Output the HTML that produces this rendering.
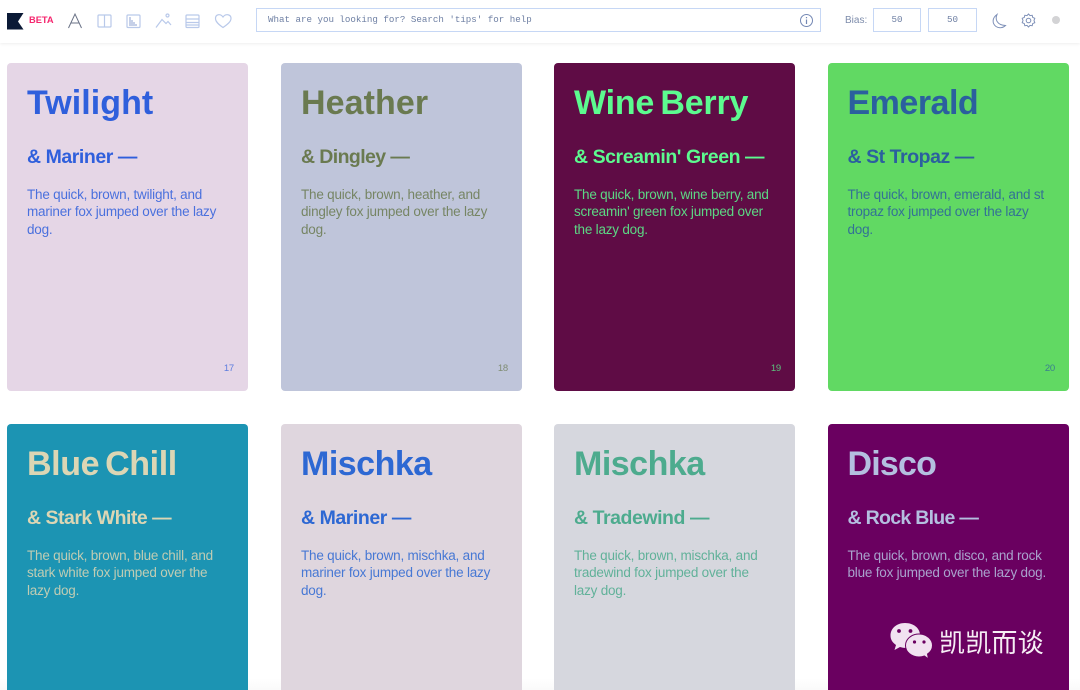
<!DOCTYPE html>
<html lang="en"><head><meta charset="utf-8"><title>Fontpair cards</title>
<style>
*{box-sizing:border-box}
html,body{margin:0;padding:0;width:1080px;height:690px;overflow:hidden;background:#fff;font-family:"Liberation Sans",sans-serif}
#wrap{position:relative;width:1080px;height:690px;overflow:hidden;background:#fff}
.nav{position:absolute;left:0;top:0;width:1080px;height:43px;background:#fff;box-shadow:0 1px 3px rgba(0,0,0,.07)}
.abs{position:absolute}
.card{position:absolute;width:241px;height:328px;border-radius:4px;overflow:hidden}
.low{height:266px;border-radius:4px 4px 0 0}
.card div{position:absolute;white-space:nowrap}
.t{left:20px;top:20px;font-size:34px;line-height:40px;font-weight:700;letter-spacing:-.2px;word-spacing:-3px}
.s{left:20px;top:82.400px;font-size:19.5px;line-height:24px;font-weight:700;letter-spacing:-.45px}
.b{left:20px;top:122.500px;font-size:13.5px;line-height:17.7px;opacity:.85;letter-spacing:-.21px}
.n{right:14px;top:300px;font-size:9.5px;line-height:12px;opacity:.75;letter-spacing:-.2px}
.box{position:absolute;top:8px;height:24px;border:1px solid #c6d7f5;background:#fff;font-family:"Liberation Mono",monospace;font-size:9.17px;color:#6f80a4;line-height:22px}
.fade{position:absolute;left:0;bottom:0;width:1080px;height:12px;background:linear-gradient(#fff,#fafafa)}
</style></head><body><div id="wrap">
<div class="fade"></div>

<div class="card" style="left:7px;top:63px;background:#e5d6e6;color:#2f5fdc"><div class="t" style="letter-spacing:.05px">Twilight</div><div class="s">&amp; Mariner —</div><div class="b">The quick, brown, twilight, and<br>mariner fox jumped over the lazy<br>dog.</div><div class="n">17</div></div>
<div class="card" style="left:281px;top:63px;background:#bfc5da;color:#6a7a50"><div class="t" style="letter-spacing:.08px">Heather</div><div class="s" style="letter-spacing:-.6px">&amp; Dingley —</div><div class="b">The quick, brown, heather, and<br>dingley fox jumped over the lazy<br>dog.</div><div class="n">18</div></div>
<div class="card" style="left:554px;top:63px;background:#5f0c45;color:#5cfb8f"><div class="t">Wine Berry</div><div class="s">&amp; Screamin' Green —</div><div class="b">The quick, brown, wine berry, and<br>screamin' green fox jumped over<br>the lazy dog.</div><div class="n">19</div></div>
<div class="card" style="left:828px;top:63px;background:#61d963;color:#2b609e"><div class="t" style="left:19.500px;letter-spacing:-.5px">Emerald</div><div class="s" style="left:19.500px">&amp; St Tropaz —</div><div class="b" style="left:19.500px">The quick, brown, emerald, and st<br>tropaz fox jumped over the lazy<br>dog.</div><div class="n">20</div></div>

<div class="card low" style="left:7px;top:424px;background:#1c94b3;color:#dcd6b4"><div class="t" style="letter-spacing:-.4px">Blue Chill</div><div class="s" style="letter-spacing:-.5px">&amp; Stark White —</div><div class="b">The quick, brown, blue chill, and<br>stark white fox jumped over the<br>lazy dog.</div></div>
<div class="card low" style="left:281px;top:424px;background:#dfd6de;color:#2d68d3"><div class="t" style="letter-spacing:-.5px">Mischka</div><div class="s">&amp; Mariner —</div><div class="b">The quick, brown, mischka, and<br>mariner fox jumped over the lazy<br>dog.</div></div>
<div class="card low" style="left:554px;top:424px;background:#d6d7de;color:#4dab8e"><div class="t" style="letter-spacing:-.5px">Mischka</div><div class="s">&amp; Tradewind —</div><div class="b">The quick, brown, mischka, and<br>tradewind fox jumped over the<br>lazy dog.</div></div>
<div class="card low" style="left:828px;top:424px;background:#6a0060;color:#b4bfe0"><div class="t" style="left:19.500px;letter-spacing:-.8px">Disco</div><div class="s" style="left:19.500px;letter-spacing:-.7px">&amp; Rock Blue —</div><div class="b" style="left:19.500px">The quick, brown, disco, and rock<br>blue fox jumped over the lazy dog.</div></div>

<div class="nav">
  <svg class="abs" style="left:7px;top:13px" width="17" height="17" viewBox="0 0 17 17"><path d="M0 0H16.5L11 8.500L16.500 16.500H0Z" fill="#0b1a36"/></svg>
  <div class="abs" style="left:29px;top:14px;font-size:9.3px;line-height:13px;font-weight:700;color:#f5266e">BETA</div>
  <svg class="abs" style="left:66px;top:11px" width="170" height="20" viewBox="0 0 170 20" fill="none" stroke-width="1">
    <path d="M2.500 17L9 3L15.500 17M5 12H13" stroke="#6a7286"/>
    <g stroke="#b9c9ea" stroke-width="1.200">
      <rect x="32" y="4" width="13" height="12" rx="1"/><path d="M38.500 4V16"/>
      <rect x="61" y="4" width="13" height="12.500" rx="1"/><path d="M64 6V15M66 9V15M68 11V15M70 13V15" stroke="#9fb1d8"/>
      <path d="M90 16.500L96 8.500L100 12.500L102 10.500L105 14"/><circle cx="101.500" cy="4.500" r="1.500"/>
      <rect x="120" y="4" width="13" height="12.500" rx="1"/><path d="M120 8H133M120 11.500H133M120 14H133"/>
      <path d="M157 16.500C152 13 149.500 10.500 149.500 7.500C149.500 3 154.500 2.500 157 6C159.500 2.500 165 3 165 7.500C165 10.500 162 13 157 16.500Z"/>
    </g>
  </svg>
  <div class="box" style="left:256px;width:565px;padding-left:11px">What are you looking for? Search 'tips' for help</div>
  <svg class="abs" style="left:799px;top:13px" width="15" height="15" viewBox="0 0 15 15" fill="none"><circle cx="7.500" cy="7.500" r="6" stroke="#7488b4"/><path d="M7.500 6.500V11M7.500 4V5.200" stroke="#7488b4" stroke-width="1.200"/></svg>
  <div class="abs" style="left:845px;top:14px;font-size:10px;line-height:13px;color:#7d8cab">Bias:</div>
  <div class="box" style="left:873px;width:48px;text-align:center">50</div>
  <div class="box" style="left:928px;width:49px;text-align:center">50</div>
  <svg class="abs" style="left:991px;top:13px" width="16" height="16" viewBox="0 0 16 16" fill="none"><path d="M6 1.500C4 6 5.500 12 14.500 12.500C12 15 8 15.500 5 13.500C1 10.500 1 5 6 1.500Z" stroke="#7e90b8"/></svg>
  <svg class="abs" style="left:1021px;top:13px" width="15" height="15" viewBox="0 0 15 15" fill="none"><path d="M7.500 1L9 2.600L11.200 2.300L11.700 4.400L13.800 5.300L13 7.500L13.800 9.700L11.700 10.600L11.200 12.700L9 12.400L7.500 14L6 12.400L3.800 12.700L3.300 10.600L1.200 9.700L2 7.500L1.200 5.300L3.300 4.400L3.800 2.300L6 2.600Z" stroke="#7e90b8"/><circle cx="7.500" cy="7.500" r="2.300" stroke="#7e90b8"/></svg>
  <div class="abs" style="left:1052px;top:16px;width:8px;height:8px;border-radius:50%;background:#d3d3d5"></div>
</div>

<svg class="abs" style="left:889px;top:621px" width="46" height="40" viewBox="0 0 46 40">
  <path d="M16 2C7.500 2 1.500 7.500 1.500 14.500C1.500 18.500 3.500 21.500 7 24L5.500 29L11 26C13 26.500 15 27 17 27C26 27 31 20 31 14C31 7.500 25 2 16 2Z" fill="#f1e2f0"/>
  <path d="M30 13C22 13 16.500 18.500 16.500 24.500C16.500 31 22.500 36 30 36C32 36 33.500 35.700 35.500 35L39.500 38L38.500 33C41.500 31 43.500 28 43.500 24.500C43.500 18.500 38 13 30 13Z" fill="#f1e2f0" stroke="#6a0060"/>
  <circle cx="10" cy="10" r="1.900" fill="#6a0060"/><circle cx="21.500" cy="10" r="1.900" fill="#6a0060"/>
  <circle cx="25.500" cy="21" r="1.600" fill="#6a0060"/><circle cx="35" cy="21" r="1.600" fill="#6a0060"/>
</svg>
<div class="abs" style="left:939px;top:628px;font-size:26px;line-height:30px;color:#f6eef5;letter-spacing:.2px;white-space:nowrap;font-family:'Liberation Sans','WenQuanYi Zen Hei','Noto Sans CJK SC',sans-serif">凯凯而谈</div>
</div></body></html>
